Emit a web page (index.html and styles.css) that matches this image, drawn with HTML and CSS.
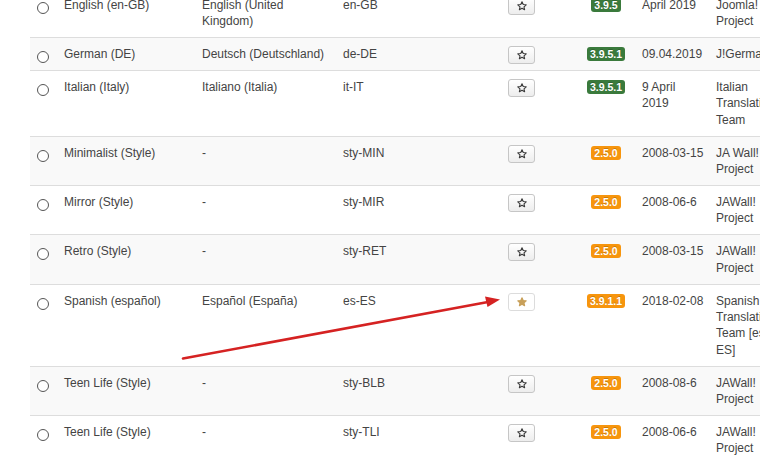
FILE: index.html
```html
<!DOCTYPE html>
<html lang="en">
  <head>
    <meta charset="UTF-8" />
    <meta name="viewport" content="width=device-width, initial-scale=1" />
    <title>Languages</title>
    <link rel="stylesheet" href="styles.css">
  </head>
  <body>
    <table class="lang-table">
      <colgroup>
        <col class="c-sel" />
        <col class="c-name" />
        <col class="c-native" />
        <col class="c-code" />
        <col class="c-default" />
        <col class="c-version" />
        <col class="c-date" />
        <col class="c-author" />
      </colgroup>
      <tbody>
        <tr>
          <td><input type="radio" name="lang" class="sel" /></td>
          <td>English (en-GB)</td>
          <td>English (United Kingdom)</td>
          <td>en-GB</td>
          <td class="center"><button type="button" class="star-btn"><svg viewBox="0 0 10 10"><path d="M5 .8l1.25 2.7 2.95.3-2.2 2 .62 2.9L5 7.2 2.38 8.7 3 5.8.8 3.8l2.95-.3z" /></svg></button></td>
          <td class="center"><span class="badge green">3.9.5</span></td>
          <td class="date">April 2019</td>
          <td>Joomla! Project</td>
        </tr>
        <tr class="odd">
          <td><input type="radio" name="lang" class="sel" /></td>
          <td>German (DE)</td>
          <td>Deutsch (Deutschland)</td>
          <td>de-DE</td>
          <td class="center"><button type="button" class="star-btn"><svg viewBox="0 0 10 10"><path d="M5 .8l1.25 2.7 2.95.3-2.2 2 .62 2.9L5 7.2 2.38 8.7 3 5.8.8 3.8l2.95-.3z" /></svg></button></td>
          <td class="center"><span class="badge green">3.9.5.1</span></td>
          <td class="date">09.04.2019</td>
          <td>J!German</td>
        </tr>
        <tr>
          <td><input type="radio" name="lang" class="sel" /></td>
          <td>Italian (Italy)</td>
          <td>Italiano (Italia)</td>
          <td>it-IT</td>
          <td class="center"><button type="button" class="star-btn"><svg viewBox="0 0 10 10"><path d="M5 .8l1.25 2.7 2.95.3-2.2 2 .62 2.9L5 7.2 2.38 8.7 3 5.8.8 3.8l2.95-.3z" /></svg></button></td>
          <td class="center"><span class="badge green">3.9.5.1</span></td>
          <td class="date">9 April 2019</td>
          <td>Italian Translation Team</td>
        </tr>
        <tr class="odd">
          <td><input type="radio" name="lang" class="sel" /></td>
          <td>Minimalist (Style)</td>
          <td>-</td>
          <td>sty-MIN</td>
          <td class="center"><button type="button" class="star-btn"><svg viewBox="0 0 10 10"><path d="M5 .8l1.25 2.7 2.95.3-2.2 2 .62 2.9L5 7.2 2.38 8.7 3 5.8.8 3.8l2.95-.3z" /></svg></button></td>
          <td class="center"><span class="badge orange">2.5.0</span></td>
          <td class="date">2008-03-15</td>
          <td>JA Wall! Project</td>
        </tr>
        <tr>
          <td><input type="radio" name="lang" class="sel" /></td>
          <td>Mirror (Style)</td>
          <td>-</td>
          <td>sty-MIR</td>
          <td class="center"><button type="button" class="star-btn"><svg viewBox="0 0 10 10"><path d="M5 .8l1.25 2.7 2.95.3-2.2 2 .62 2.9L5 7.2 2.38 8.7 3 5.8.8 3.8l2.95-.3z" /></svg></button></td>
          <td class="center"><span class="badge orange">2.5.0</span></td>
          <td class="date">2008-06-6</td>
          <td>JAWall! Project</td>
        </tr>
        <tr class="odd">
          <td><input type="radio" name="lang" class="sel" /></td>
          <td>Retro (Style)</td>
          <td>-</td>
          <td>sty-RET</td>
          <td class="center"><button type="button" class="star-btn"><svg viewBox="0 0 10 10"><path d="M5 .8l1.25 2.7 2.95.3-2.2 2 .62 2.9L5 7.2 2.38 8.7 3 5.8.8 3.8l2.95-.3z" /></svg></button></td>
          <td class="center"><span class="badge orange">2.5.0</span></td>
          <td class="date">2008-03-15</td>
          <td>JAWall! Project</td>
        </tr>
        <tr>
          <td><input type="radio" name="lang" class="sel" /></td>
          <td>Spanish (español)</td>
          <td>Español (España)</td>
          <td>es-ES</td>
          <td class="center"><button type="button" class="star-btn active"><svg viewBox="0 0 10 10"><path d="M5 .8l1.25 2.7 2.95.3-2.2 2 .62 2.9L5 7.2 2.38 8.7 3 5.8.8 3.8l2.95-.3z" /></svg></button></td>
          <td class="center"><span class="badge orange">3.9.1.1</span></td>
          <td class="date">2018-02-08</td>
          <td>Spanish Translation Team [es-ES]</td>
        </tr>
        <tr class="odd">
          <td><input type="radio" name="lang" class="sel" /></td>
          <td>Teen Life (Style)</td>
          <td>-</td>
          <td>sty-BLB</td>
          <td class="center"><button type="button" class="star-btn"><svg viewBox="0 0 10 10"><path d="M5 .8l1.25 2.7 2.95.3-2.2 2 .62 2.9L5 7.2 2.38 8.7 3 5.8.8 3.8l2.95-.3z" /></svg></button></td>
          <td class="center"><span class="badge orange">2.5.0</span></td>
          <td class="date">2008-08-6</td>
          <td>JAWall! Project</td>
        </tr>
        <tr>
          <td><input type="radio" name="lang" class="sel" /></td>
          <td>Teen Life (Style)</td>
          <td>-</td>
          <td>sty-TLI</td>
          <td class="center"><button type="button" class="star-btn"><svg viewBox="0 0 10 10"><path d="M5 .8l1.25 2.7 2.95.3-2.2 2 .62 2.9L5 7.2 2.38 8.7 3 5.8.8 3.8l2.95-.3z" /></svg></button></td>
          <td class="center"><span class="badge orange">2.5.0</span></td>
          <td class="date">2008-06-6</td>
          <td>JAWall! Project</td>
        </tr>
      </tbody>
    </table>

    <!-- annotation arrow drawn over the table -->
    <svg class="arrow" viewBox="0 0 760 457" width="760" height="457">
      <line x1="183" y1="358.5" x2="488" y2="302" />
      <polygon points="500,299.5 485,296.5 487.5,307" />
    </svg>
  </body>
</html>
```

FILE: styles.css
```css
* {
  box-sizing: border-box;
}
html,
body {
  height: 100%;
}
body {
  margin: 0;
  background: #fff;
  color: #444;
  font-family: "Liberation Sans", Arial, sans-serif;
  font-size: 12px;
  line-height: 16.4px;
  overflow: hidden;
  position: relative;
}
.lang-table {
  table-layout: fixed;
  border-collapse: collapse;
  width: 758px;
  margin: -12.3px 0 0 30px;
}
.c-sel {
  width: 26px;
}
.c-name {
  width: 138px;
}
.c-native {
  width: 141px;
}
.c-code {
  width: 130px;
}
.c-default {
  width: 113px;
}
.c-version {
  width: 56px;
}
.c-date {
  width: 74px;
}
.c-author {
  width: 80px;
}
.lang-table td {
  vertical-align: top;
  padding: 8px 8px 7.5px;
  border-top: 1px solid #dddddd;
  text-align: left;
}
.lang-table tr.odd td {
  background: #f9f9f9;
}
.lang-table td.center {
  text-align: center;
  padding-left: 0;
  padding-right: 0;
}
.lang-table td.date {
  padding-right: 3.5px;
}
.sel {
  appearance: none;
  -webkit-appearance: none;
  display: block;
  width: 12px;
  height: 12px;
  margin: 5px 0 -1px -1px;
  border: 1px solid #555;
  border-radius: 50%;
  background: #fff;
}
.star-btn {
  display: inline-flex;
  align-items: center;
  justify-content: center;
  width: 27px;
  height: 18px;
  padding: 0;
  margin: 0 0 -2px;
  border: 1px solid #c6c6c6;
  border-radius: 3px;
  background: linear-gradient(#ffffff, #ededed);
  vertical-align: top;
}
.star-btn svg {
  width: 10px;
  height: 10px;
  fill: none;
  stroke: #3a3a3a;
  stroke-width: 1.1;
  stroke-linejoin: round;
}
.star-btn.active {
  border-color: #dcdcdc;
  background: #fff;
}
.star-btn.active svg {
  fill: #c8a05a;
  stroke: #c8a05a;
}
.badge {
  display: inline-block;
  margin-top: 1px;
  padding: 1px 3px;
  border-radius: 3px;
  color: #fff;
  font-size: 10.5px;
  font-weight: 700;
  line-height: 12px;
  text-shadow: 0 -1px 0 rgba(0, 0, 0, 0.2);
  vertical-align: top;
}
.badge.green {
  background: #3a7a3c;
}
.badge.orange {
  background: #f7950d;
}
.arrow {
  position: absolute;
  left: 0;
  top: 0;
  pointer-events: none;
}
.arrow line {
  stroke: #d52222;
  stroke-width: 2.6;
  stroke-linecap: round;
}
.arrow polygon {
  fill: #d52222;
}
```
